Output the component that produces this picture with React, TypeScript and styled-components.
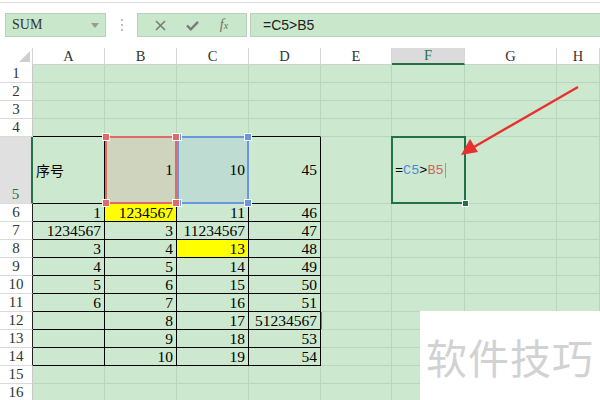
import React from 'react';
import styled, { createGlobalStyle } from 'styled-components';

const GREEN = '#cce8cf';
const GRID = '#b9d6bc';
const DARK = '#217346';
const YELLOW = '#ffff00';

const GlobalStyle = createGlobalStyle`
  html, body { margin: 0; padding: 0; background: #fff; overflow: hidden; }
  body { font-family: "Liberation Serif", "Noto Sans CJK SC", serif; }
`;

const Page = styled.div`
  position: relative;
  width: 600px;
  height: 400px;
  overflow: hidden;
  background: #fff;
`;

const TopBar = styled.div`
  margin-top: 2px;
  height: 46px;
  box-sizing: border-box;
  border-top: 1px solid #d9d9d9;
  padding-top: 10px;
  display: flex;
  align-items: flex-start;
`;

const NameBox = styled.div`
  position: relative;
  box-sizing: border-box;
  margin-left: 5px;
  width: 101px;
  height: 24px;
  background: #c9e7cb;
  border: 1px solid #b7d2b9;
  display: flex;
  align-items: center;
  padding-left: 6px;
  font-size: 14px;
  color: #333;

  &::after {
    content: '';
    position: absolute;
    right: 6px;
    top: 9px;
    border-left: 4px solid transparent;
    border-right: 4px solid transparent;
    border-top: 5px solid #999;
  }
`;

const Dots = styled.div`
  width: 31px;
  height: 24px;
  display: flex;
  flex-direction: column;
  align-items: center;
  justify-content: center;
  gap: 3px;

  span {
    width: 2px;
    height: 2px;
    background: #bdbdbd;
  }
`;

const ButtonGroup = styled.div`
  box-sizing: border-box;
  width: 110px;
  height: 24px;
  background: #c9e7cb;
  border: 1px solid #b7d2b9;
  display: flex;
  align-items: center;
  justify-content: space-around;
  padding: 0 6px;
`;

const IconButton = styled.div`
  width: 22px;
  display: flex;
  align-items: center;
  justify-content: center;
  color: #7d7d7d;
`;

const FxLabel = styled.span`
  font-family: "Liberation Serif", serif;
  font-style: italic;
  font-size: 14px;
  color: #6f6f6f;

  small {
    font-size: 10px;
  }
`;

const FormulaInput = styled.div`
  box-sizing: border-box;
  flex: 1;
  margin-left: 3px;
  height: 24px;
  background: #c9e7cb;
  border: 1px solid #b7d2b9;
  border-right: none;
  display: flex;
  align-items: center;
  padding-left: 12px;
  font-family: "Liberation Sans", sans-serif;
  font-size: 14px;
  color: #222;
`;

const Sheet = styled.div`
  display: grid;
  grid-template-columns: 33px 72px 72px 72px 72px 71px 73px 92px 1fr;
  grid-template-rows: 17px repeat(4, 18px) 67px repeat(11, 18px);
`;

const Corner = styled.div`
  position: relative;
  border-right: 1px solid #d4d4d4;

  &::after {
    content: '';
    position: absolute;
    right: 2px;
    bottom: 3px;
    border-left: 11px solid transparent;
    border-bottom: 11px solid #cfcfcf;
  }
`;

const ColHeader = styled.div<{ $active?: boolean }>`
  box-sizing: border-box;
  display: flex;
  align-items: center;
  justify-content: center;
  font-size: 14.5px;
  color: ${p => (p.$active ? DARK : '#333')};
  background: ${p => (p.$active ? '#dbdbdb' : '#fff')};
  border-right: 1px solid #d6d6d6;
  border-bottom: ${p => (p.$active ? `2px solid ${DARK}` : '1px solid #d0d0d0')};
`;

const RowHeader = styled.div<{ $active?: boolean; $edge?: boolean }>`
  box-sizing: border-box;
  display: flex;
  align-items: flex-end;
  justify-content: center;
  font-size: 15px;
  line-height: 17px;
  color: ${p => (p.$active ? DARK : '#333')};
  background: ${p => (p.$active ? '#e0e0e0' : '#fff')};
  border-bottom: 1px solid #dadada;
  border-right: ${p =>
    p.$active ? `2px solid ${DARK}` : p.$edge ? '1px solid #222' : '1px solid #c9c9c9'};
`;

const Cell = styled.div<{ $fill?: string; $right?: boolean; $bottom?: boolean; $left?: boolean }>`
  position: relative;
  box-sizing: border-box;
  display: flex;
  align-items: center;
  justify-content: ${p => (p.$left ? 'flex-start' : 'flex-end')};
  padding: 0 3px;
  background: ${p => p.$fill || GREEN};
  border-right: 1px solid ${p => (p.$right ? '#000' : GRID)};
  border-bottom: 1px solid ${p => (p.$bottom ? '#000' : GRID)};
  font-size: 15.5px;
  color: #000;
  white-space: nowrap;
`;

const CjkText = styled.span`
  font-family: "Noto Sans CJK SC", sans-serif;
  font-size: 14px;
`;

const RangeBox = styled.div<{ $color: string; $front?: boolean }>`
  position: absolute;
  z-index: ${p => (p.$front ? 3 : 2)};
  top: -1px;
  left: 0;
  right: -1px;
  bottom: -1px;
  border: 2px solid ${p => p.$color};
  pointer-events: none;
`;

const Handle = styled.span<{ $color: string; $v: 'top' | 'bottom'; $h: 'left' | 'right' }>`
  position: absolute;
  ${p => p.$v}: -4px;
  ${p => p.$h}: -4px;
  width: 6px;
  height: 6px;
  box-sizing: border-box;
  background: ${p => p.$color};
  outline: 1px solid #fff;
`;

const ActiveBox = styled.div`
  position: absolute;
  z-index: 2;
  top: -1px;
  left: -1px;
  right: -2px;
  bottom: -1px;
  border: 2px solid ${DARK};
  pointer-events: none;

  &::after {
    content: '';
    position: absolute;
    right: -4px;
    bottom: -4px;
    width: 5px;
    height: 5px;
    background: ${DARK};
    outline: 1px solid #fff;
  }
`;

const Ref = styled.span<{ $color: string }>`
  color: ${p => p.$color};
`;

const Caret = styled.span`
  display: inline-block;
  width: 1px;
  height: 15px;
  margin-left: 1px;
  background: #9a9a9a;
`;

const EditText = styled.span`
  display: flex;
  align-items: center;
  font-family: "Liberation Mono", monospace;
  font-size: 13.5px;
`;

const Mark = styled.span`
  position: absolute;
  z-index: 2;
  top: 0;
  bottom: 0;
  right: -2px;
  width: 1px;
  background: #e8503a;
`;

const Arrow = styled.svg`
  position: absolute;
  z-index: 4;
  left: 0;
  top: 0;
  pointer-events: none;
`;

const Watermark = styled.div`
  position: absolute;
  z-index: 4;
  left: 420px;
  top: 311px;
  right: 0;
  bottom: 0;
  background: #fff;
  display: flex;
  align-items: center;
  justify-content: center;
  font-family: "Noto Sans CJK SC", sans-serif;
  font-size: 41px;
  color: #d2d2d2;
  letter-spacing: 1px;
`;

type CellData = { v: React.ReactNode; fill?: string; left?: boolean };

const COLS = ['A', 'B', 'C', 'D', 'E', 'F', 'G', 'H'];

const table: Record<number, (string | CellData)[]> = {
  5: [{ v: <CjkText>序号</CjkText>, left: true }, '1', '10', '45'],
  6: ['1', { v: '1234567', fill: YELLOW }, '11', '46'],
  7: ['1234567', '3', '11234567', '47'],
  8: ['3', '4', { v: '13', fill: YELLOW }, '48'],
  9: ['4', '5', '14', '49'],
  10: ['5', '6', '15', '50'],
  11: ['6', '7', '16', '51'],
  12: ['', '8', '17', '51234567'],
  13: ['', '9', '18', '53'],
  14: ['', '10', '19', '54'],
};

const RED = '#e06b66';
const BLUE = '#6b97e0';

const Corners: React.FC<{ color: string }> = ({ color }) => (
  <>
    <Handle $color={color} $v="top" $h="left" />
    <Handle $color={color} $v="top" $h="right" />
    <Handle $color={color} $v="bottom" $h="left" />
    <Handle $color={color} $v="bottom" $h="right" />
  </>
);

function renderCell(r: number, c: number) {
  const inTable = r >= 5 && r <= 14 && c <= 3;
  const raw = table[r]?.[c];
  const data: CellData | undefined =
    raw === undefined ? undefined : typeof raw === 'string' ? { v: raw } : raw;
  let fill = data?.fill;
  let extra: React.ReactNode = null;
  let content: React.ReactNode = data?.v;
  let left = data?.left;

  if (r === 5 && c === 1) {
    fill = '#cfd4bf';
    extra = (
      <RangeBox $color={RED} $front>
        <Corners color={RED} />
      </RangeBox>
    );
  }
  if (r === 5 && c === 2) {
    fill = '#bedcd2';
    extra = (
      <RangeBox $color={BLUE}>
        <Corners color={BLUE} />
      </RangeBox>
    );
  }
  if (r === 5 && c === 5) {
    left = true;
    content = (
      <EditText>
        =<Ref $color="#4f86d8">C5</Ref>&gt;<Ref $color="#d4625c">B5</Ref>
        <Caret />
      </EditText>
    );
    extra = <ActiveBox />;
  }
  if (r === 12 && c === 3) extra = <Mark />;

  return (
    <Cell
      key={`${r}-${c}`}
      $fill={fill}
      $left={left}
      $right={inTable}
      $bottom={r >= 4 && r <= 14 && c <= 3}
    >
      {content}
      {extra}
    </Cell>
  );
}

export default function App() {
  const rows = Array.from({ length: 16 }, (_, i) => i + 1);
  return (
    <Page>
      <GlobalStyle />
      <TopBar>
        <NameBox>SUM</NameBox>
        <Dots>
          <span />
          <span />
          <span />
        </Dots>
        <ButtonGroup>
          <IconButton>
            <svg width="11" height="11" viewBox="0 0 11 11">
              <path d="M1 1L10 10M10 1L1 10" stroke="#7a7a7a" strokeWidth="1.6" fill="none" />
            </svg>
          </IconButton>
          <IconButton>
            <svg width="13" height="11" viewBox="0 0 13 11">
              <path d="M1 5.5L4.8 9.3L12 1.8" stroke="#7a7a7a" strokeWidth="2.4" fill="none" />
            </svg>
          </IconButton>
          <IconButton>
            <FxLabel>
              f<small>x</small>
            </FxLabel>
          </IconButton>
        </ButtonGroup>
        <FormulaInput>=C5&gt;B5</FormulaInput>
      </TopBar>

      <Sheet>
        <Corner />
        {COLS.map(c => (
          <ColHeader key={`h${c}`} $active={c === 'F'}>
            {c}
          </ColHeader>
        ))}
        {rows.map(r => (
          <React.Fragment key={r}>
            <RowHeader $active={r === 5} $edge={r >= 6 && r <= 14}>
              {r}
            </RowHeader>
            {COLS.map((_, c) => renderCell(r, c))}
          </React.Fragment>
        ))}
      </Sheet>

      <Arrow width="600" height="400" viewBox="0 0 600 400">
        <line x1="578" y1="87" x2="474" y2="147" stroke="#e8302f" strokeWidth="2.4" />
        <polygon points="461,155 478,152 470,139" fill="#e8302f" />
      </Arrow>

      <Watermark>软件技巧</Watermark>
    </Page>
  );
}
